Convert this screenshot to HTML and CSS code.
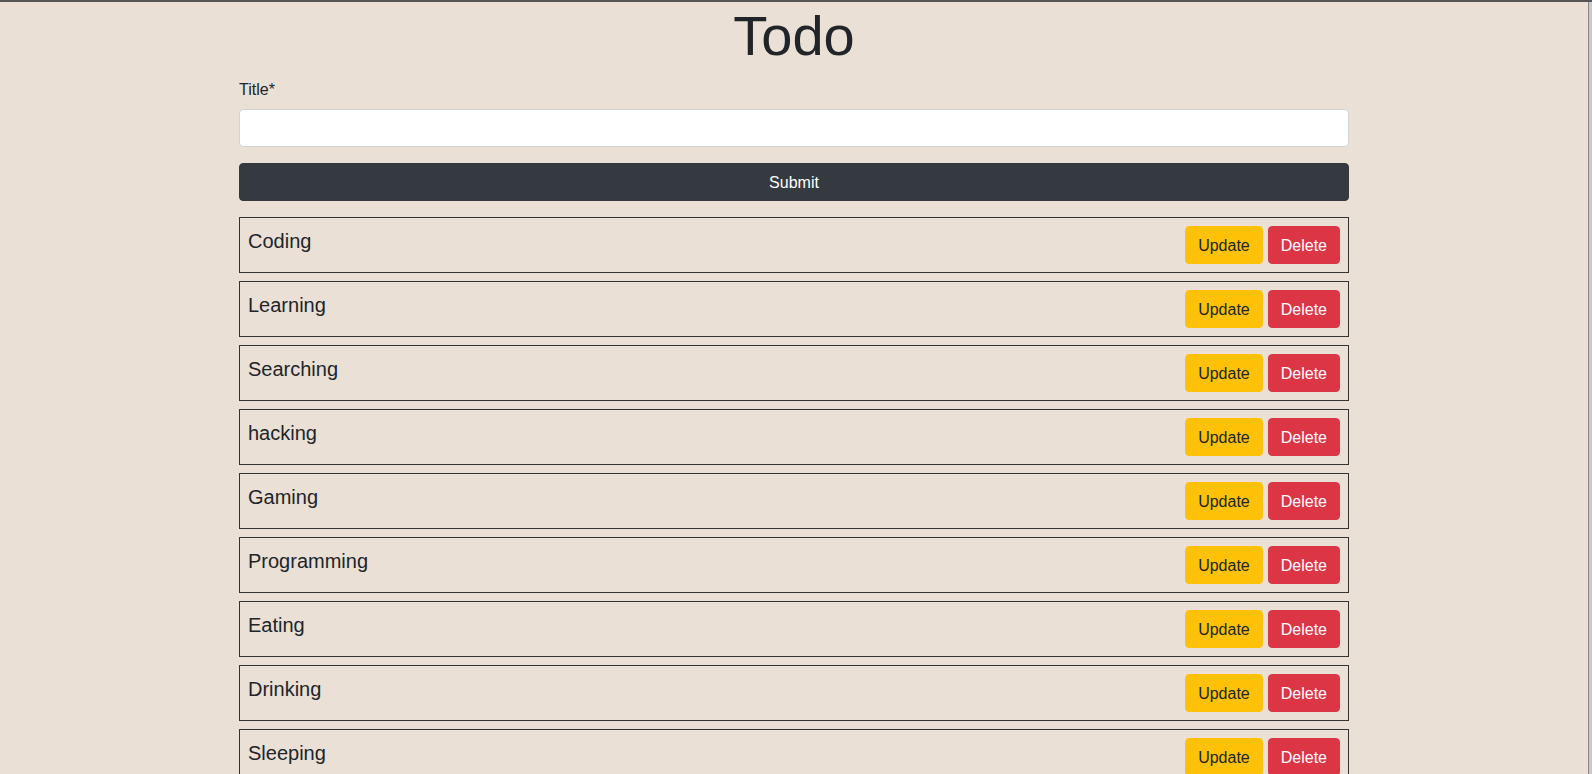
FILE: index.html
```html
<!DOCTYPE html>
<html lang="en">
<head>
<meta charset="utf-8">
<title>Todo</title>
<link rel="stylesheet" href="styles.css">
</head>
<body>
<div class="page">
  <div class="container">
    <h1 class="title">Todo</h1>
    <form class="todo-form">
      <div class="form-group">
        <label class="label" for="title">Title*</label>
        <input class="input" id="title" type="text">
      </div>
      <button class="btn btn-dark btn-block" type="button">Submit</button>
    </form>
    <ul class="todo-list">
      <li class="todo"><span class="todo-text">Coding</span><div class="actions"><button class="btn btn-warning">Update</button><button class="btn btn-danger">Delete</button></div></li>
      <li class="todo"><span class="todo-text">Learning</span><div class="actions"><button class="btn btn-warning">Update</button><button class="btn btn-danger">Delete</button></div></li>
      <li class="todo"><span class="todo-text">Searching</span><div class="actions"><button class="btn btn-warning">Update</button><button class="btn btn-danger">Delete</button></div></li>
      <li class="todo"><span class="todo-text">hacking</span><div class="actions"><button class="btn btn-warning">Update</button><button class="btn btn-danger">Delete</button></div></li>
      <li class="todo"><span class="todo-text">Gaming</span><div class="actions"><button class="btn btn-warning">Update</button><button class="btn btn-danger">Delete</button></div></li>
      <li class="todo"><span class="todo-text">Programming</span><div class="actions"><button class="btn btn-warning">Update</button><button class="btn btn-danger">Delete</button></div></li>
      <li class="todo"><span class="todo-text">Eating</span><div class="actions"><button class="btn btn-warning">Update</button><button class="btn btn-danger">Delete</button></div></li>
      <li class="todo"><span class="todo-text">Drinking</span><div class="actions"><button class="btn btn-warning">Update</button><button class="btn btn-danger">Delete</button></div></li>
      <li class="todo"><span class="todo-text">Sleeping</span><div class="actions"><button class="btn btn-warning">Update</button><button class="btn btn-danger">Delete</button></div></li>
      <li class="todo"><span class="todo-text">Walking</span><div class="actions"><button class="btn btn-warning">Update</button><button class="btn btn-danger">Delete</button></div></li>
    </ul>
  </div>
</div>
<div class="strip"></div>
</body>
</html>
```

FILE: styles.css
```css
* { box-sizing: border-box; }

html, body {
  margin: 0;
  height: 100%;
  overflow: hidden;
}

body {
  display: flex;
  background: #eae0d5;
  border-top: 2px solid #555555;
  font-family: "Liberation Sans", Arial, sans-serif;
  font-size: 16px;
  line-height: 1.5;
  color: #212529;
}

.page {
  flex: 1;
  min-width: 0;
}

.strip {
  width: 4px;
  flex: none;
  background: #cacaca;
  border-left: 1px solid #8a8a8a;
}

.container {
  max-width: 1140px;
  margin: 0 auto;
  padding: 0 15px;
}

.title {
  margin: 0 0 8px;
  font-size: 56px;
  font-weight: 400;
  line-height: 1.2;
  text-align: center;
}

.todo-form {
  margin: 0 0 16px;
}

.form-group {
  margin-bottom: 16px;
}

.label {
  display: inline-block;
  padding-top: 1px;
  margin-bottom: 7px;
}

.input {
  display: block;
  width: 100%;
  height: 38px;
  padding: 6px 12px;
  font: inherit;
  color: #495057;
  background: #ffffff;
  border: 1px solid #ced4da;
  border-radius: 4px;
}

.btn {
  display: inline-block;
  padding: 7px 12px 5px;
  font-family: inherit;
  font-size: 16px;
  line-height: 1.5;
  border: 1px solid transparent;
  border-radius: 4px;
  cursor: pointer;
  text-align: center;
}

.btn-block {
  display: block;
  width: 100%;
}

.btn-dark {
  background: #343a40;
  border-color: #343a40;
  color: #ffffff;
}

.btn-warning {
  background: #ffc107;
  border-color: #ffc107;
  color: #212529;
}

.btn-danger {
  background: #dc3545;
  border-color: #dc3545;
  color: #ffffff;
}

.todo-list {
  list-style: none;
  margin: 0;
  padding: 0;
  display: flex;
  flex-direction: column;
  gap: 8px;
}

.todo {
  display: flex;
  justify-content: space-between;
  align-items: flex-start;
  padding: 8px;
  border: 1px solid #333333;
}

.todo-text {
  font-size: 20px;
  line-height: 1.5;
}

.actions {
  display: flex;
  gap: 5px;
}
```
